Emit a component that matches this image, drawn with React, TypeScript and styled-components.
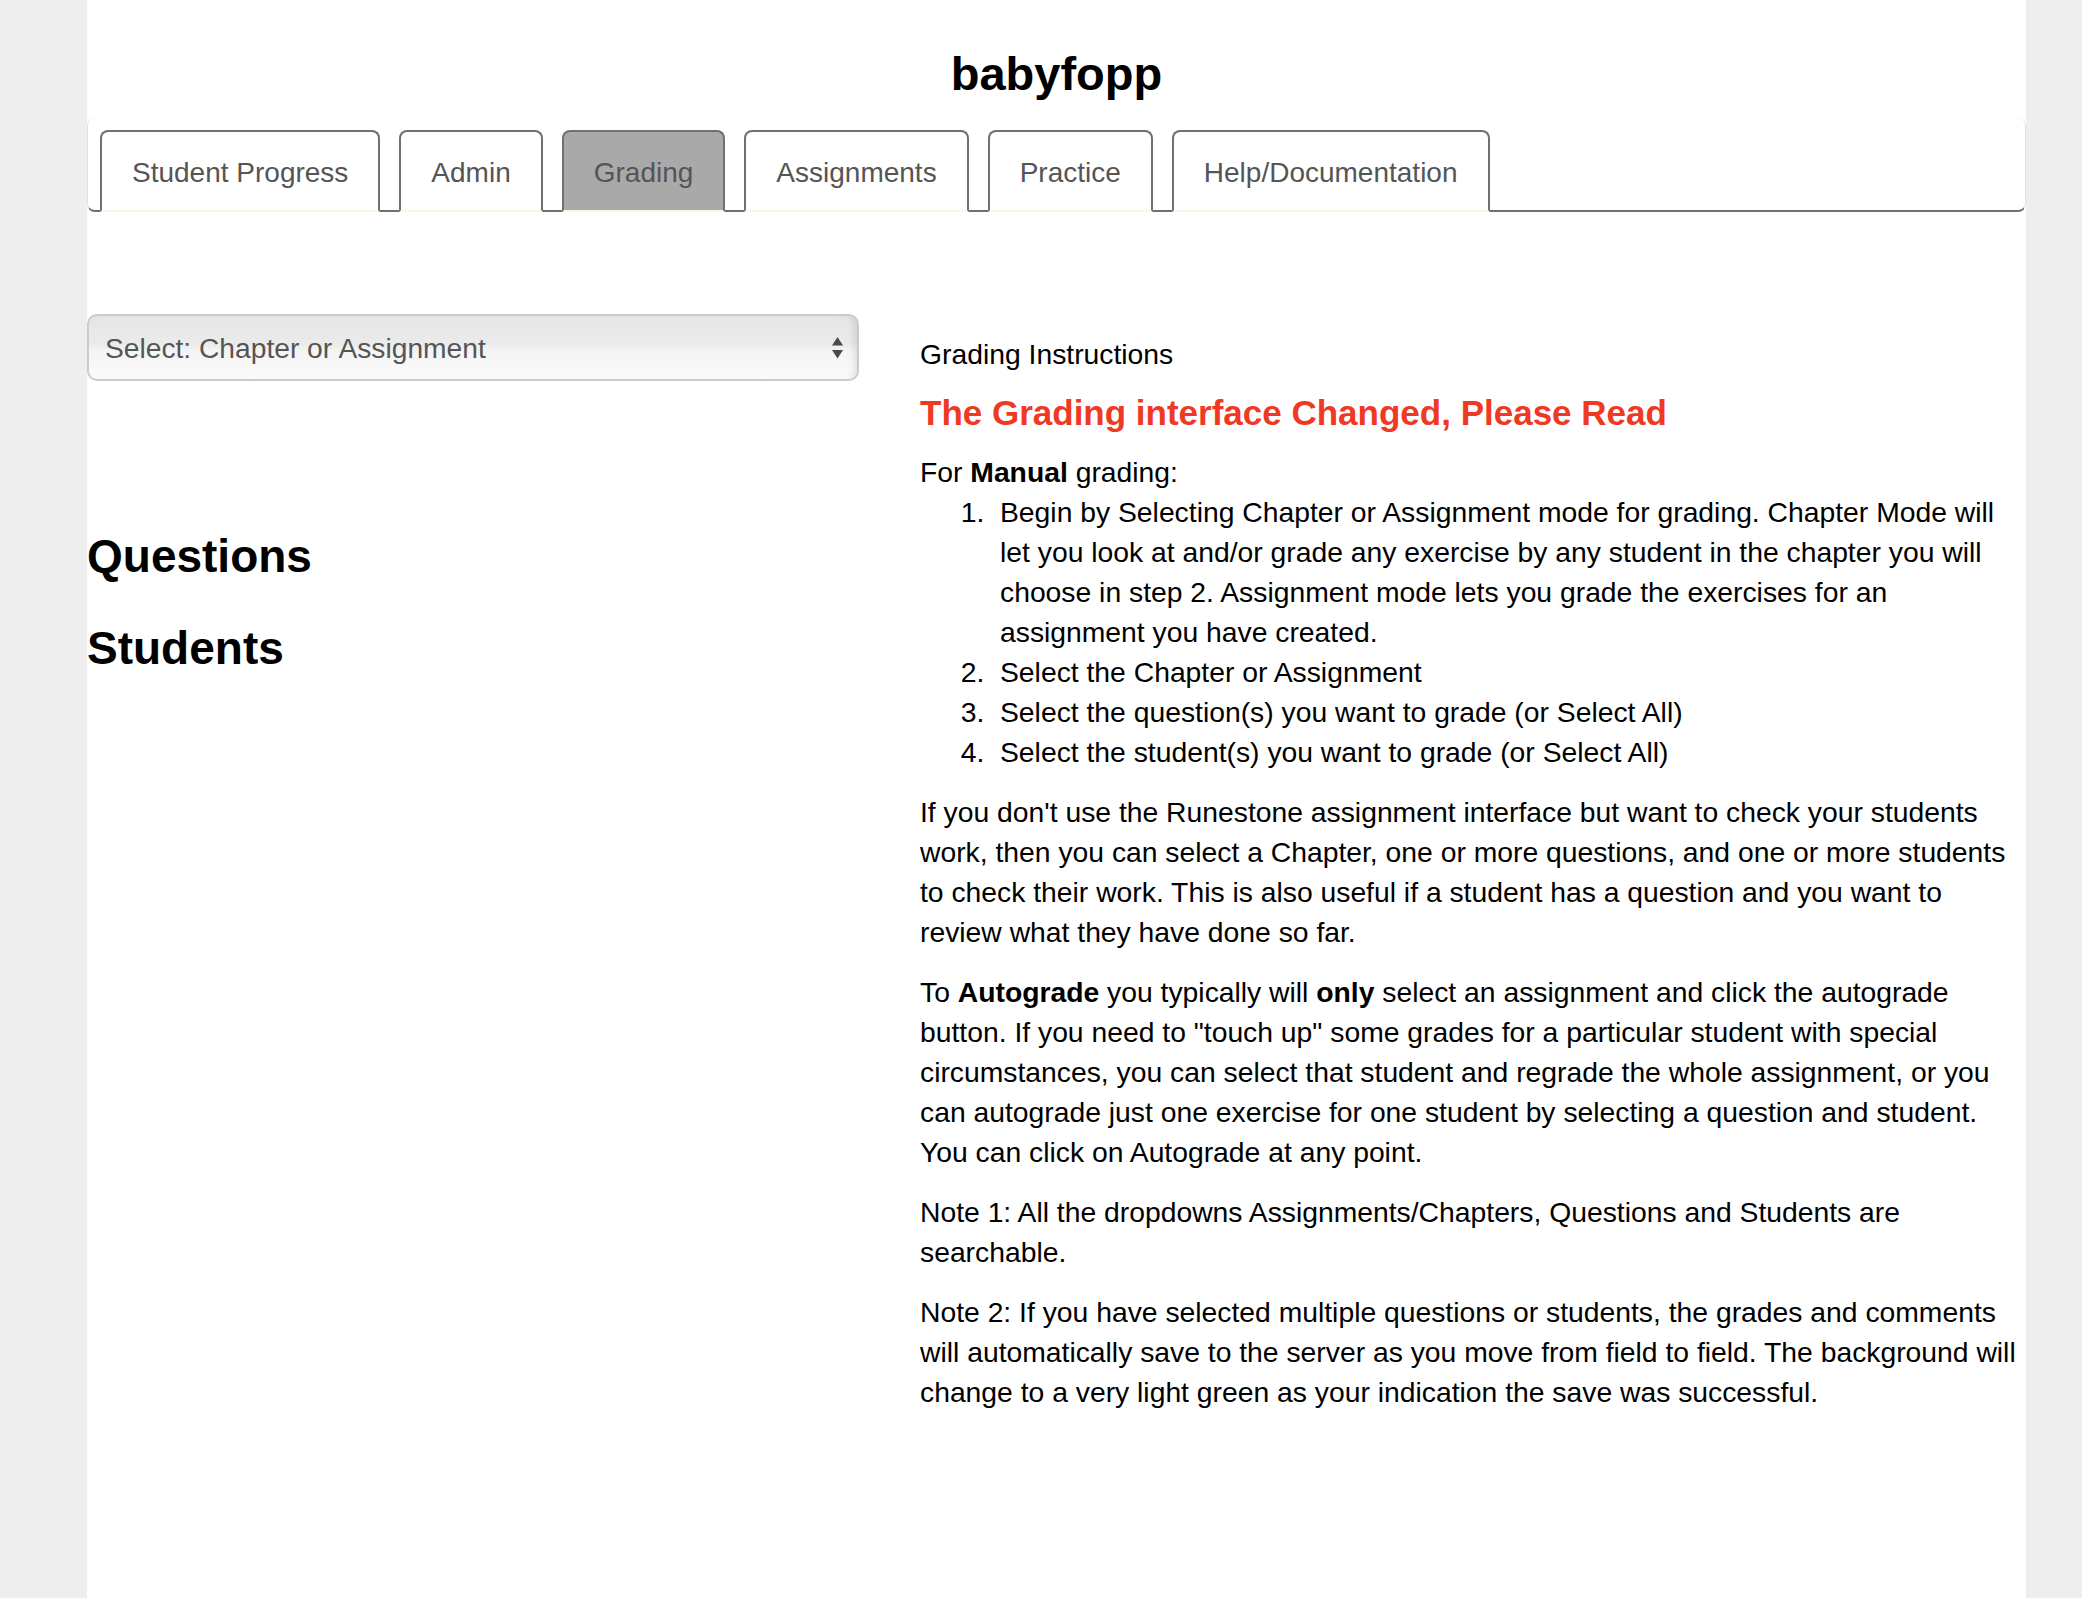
import React from "react";
import styled, { createGlobalStyle } from "styled-components";

const GlobalStyle = createGlobalStyle`
  html, body {
    margin: 0;
    padding: 0;
    background: #eeeeee;
  }
  body {
    font-family: "Liberation Sans", Helvetica, Arial, sans-serif;
    font-size: 28px;
    line-height: 40px;
    color: #000;
  }
  * {
    box-sizing: border-box;
  }
`;

const Page = styled.div`
  margin-left: 87px;
  width: 1939px;
  min-height: 1598px;
  background: #fff;
  padding-top: 48px;
`;

const SiteTitle = styled.h1`
  margin: 0;
  text-align: center;
  font-size: 47px;
  line-height: 52px;
  font-weight: bold;
  color: #000;
`;

const TabBar = styled.ul`
  list-style: none;
  margin: 18px 0 0;
  padding: 12px 0 0 12px;
  display: flex;
  gap: 19px;
  border-left: 1px solid #e2e2e2;
  border-right: 1px solid #e2e2e2;
  border-bottom: 2px solid #707070;
  border-radius: 8px;
`;

const Tab = styled.li<{ $active?: boolean }>`
  margin-bottom: -2px;
  padding: 21px 30px 17px;
  border: 2px solid #707070;
  border-bottom-color: #fcf6e4;
  border-radius: 8px 8px 0 0;
  background: ${(p) => (p.$active ? "#a9a9a9" : "#fff")};
  color: #555;
  font-size: 28px;
  line-height: 40px;
  white-space: nowrap;
  cursor: pointer;
`;

const Main = styled.div`
  display: flex;
  align-items: flex-start;
  margin-top: 102px;
`;

const LeftCol = styled.div`
  flex: none;
  width: 772px;
`;

const RightCol = styled.div`
  flex: none;
  width: 1104px;
  margin-left: 61px;
  padding-top: 20px;
  font-size: 28.3px;
  line-height: 40px;
`;

const SelectBox = styled.div`
  height: 67px;
  display: flex;
  align-items: center;
  justify-content: space-between;
  padding: 0 14px 0 16px;
  border: 2px solid #cbcbcb;
  border-radius: 10px;
  background: linear-gradient(
    to bottom,
    #e5e5e5 0%,
    #ebebeb 45%,
    #f4f4f4 55%,
    #fbfbfb 100%
  );
  box-shadow: inset -8px 0 8px -6px rgba(0, 0, 0, 0.12);
  color: #555;
  font-size: 28.2px;
  line-height: 40px;
`;

const SectionHeading = styled.h3`
  margin: 150px 0 0;
  font-size: 46px;
  line-height: 50.6px;
  font-weight: bold;
  & + & {
    margin-top: 41px;
  }
`;

const Label = styled.div`
  color: #000;
`;

const Alert = styled.h4`
  margin: 20px 0 19px;
  font-size: 35px;
  line-height: 38.5px;
  font-weight: bold;
  color: #ef3923;
`;

const Intro = styled.div``;

const Steps = styled.ol`
  margin: 0 0 20px;
  padding-left: 80px;
  li::marker {
    content: counter(list-item) ".\\00a0\\00a0";
  }
`;

const Para = styled.p`
  margin: 0 0 20px;
`;

const Arrows = () => (
  <svg width="11" height="22" viewBox="0 0 11 22" aria-hidden="true">
    <path d="M5.5 0 L11 8.5 L0 8.5 Z" fill="#4a4a4a" />
    <path d="M0 13 L11 13 L5.5 21.5 Z" fill="#4a4a4a" />
  </svg>
);

const tabs = [
  "Student Progress",
  "Admin",
  "Grading",
  "Assignments",
  "Practice",
  "Help/Documentation",
];

export default function App() {
  return (
    <>
      <GlobalStyle />
      <Page>
        <SiteTitle>babyfopp</SiteTitle>
        <TabBar>
          {tabs.map((t) => (
            <Tab key={t} $active={t === "Grading"}>
              {t}
            </Tab>
          ))}
        </TabBar>
        <Main>
          <LeftCol>
            <SelectBox>
              <span>Select: Chapter or Assignment</span>
              <Arrows />
            </SelectBox>
            <SectionHeading>Questions</SectionHeading>
            <SectionHeading>Students</SectionHeading>
          </LeftCol>
          <RightCol>
            <Label>Grading Instructions</Label>
            <Alert>The Grading interface Changed, Please Read</Alert>
            <Intro>
              For <strong>Manual</strong> grading:
            </Intro>
            <Steps>
              <li>
                Begin by Selecting Chapter or Assignment mode for grading.
                Chapter Mode will let you look at and/or grade any exercise by
                any student in the chapter you will choose in step 2.
                Assignment mode lets you grade the exercises for an assignment
                you have created.
              </li>
              <li>Select the Chapter or Assignment</li>
              <li>Select the question(s) you want to grade (or Select All)</li>
              <li>Select the student(s) you want to grade (or Select All)</li>
            </Steps>
            <Para>
              If you don't use the Runestone assignment interface but want to
              check your students work, then you can select a Chapter, one or
              more questions, and one or more students to check their work.
              This is also useful if a student has a question and you want to
              review what they have done so far.
            </Para>
            <Para>
              To <strong>Autograde</strong> you typically will{" "}
              <strong>only</strong> select an assignment and click the
              autograde button. If you need to "touch up" some grades for a
              particular student with special circumstances, you can select
              that student and regrade the whole assignment, or you can
              autograde just one exercise for one student by selecting a
              question and student. You can click on Autograde at any point.
            </Para>
            <Para>
              Note 1: All the dropdowns Assignments/Chapters, Questions and
              Students are searchable.
            </Para>
            <Para>
              Note 2: If you have selected multiple questions or students, the
              grades and comments will automatically save to the server as you
              move from field to field. The background will change to a very
              light green as your indication the save was successful.
            </Para>
          </RightCol>
        </Main>
      </Page>
    </>
  );
}
